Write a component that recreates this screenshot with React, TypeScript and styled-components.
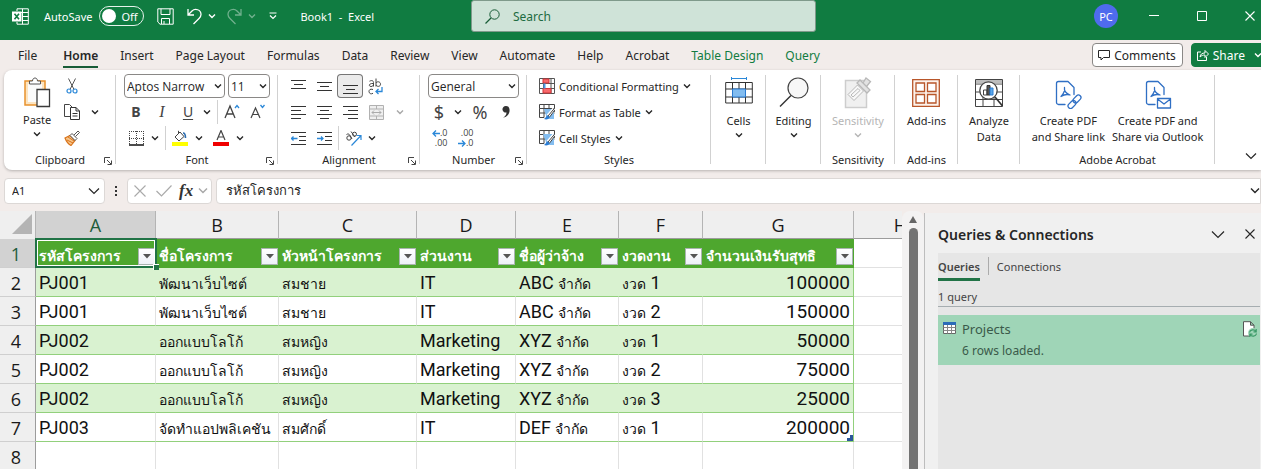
import React from "react";
import styled, { createGlobalStyle, css } from "styled-components";

const Global = createGlobalStyle`
  *, *::before, *::after { box-sizing: border-box; }
  html, body { margin: 0; background: #f2ecea; }
  body { font-family: "Noto Sans", "Open Sans", sans-serif; font-size: 12px; color: #262626; }
  button, input, select { font: inherit; color: inherit; margin: 0; padding: 0; border: 0; background: none; }
  svg { display: block; flex: none; }
`;

/* ---------- shell ---------- */
const Window = styled.div`
  display: flex;
  flex-direction: column;
  height: 100vh;
  overflow: hidden;
`;

const TitleBar = styled.header`
  display: flex;
  flex: none;
  height: 40px;
  background: #107c41;
  color: #fff;
`;
const QuickAccess = styled.div`
  display: flex;
  align-items: center;
  flex: 0 0 471px;
  height: 32px;
  padding-left: 12px;
`;
const AutoSave = styled.label`
  display: flex;
  align-items: center;
  gap: 7px;
  margin-left: 15px;
  font-size: 11px;
`;
const Pill = styled.span`
  display: flex;
  align-items: center;
  gap: 5px;
  width: 45px;
  height: 20px;
  padding-left: 2px;
  border: 1px solid #e6f3eb;
  border-radius: 10px;
`;
const Knob = styled.input`
  appearance: none;
  width: 14px;
  height: 14px;
  border-radius: 50%;
  background: #fff;
`;
const BarButton = styled.button<{ $gap?: number; $dim?: boolean }>`
  display: flex;
  align-items: center;
  gap: 6px;
  margin-left: ${(p) => p.$gap ?? 12}px;
  opacity: ${(p) => (p.$dim ? 0.4 : 1)};
`;
const DocName = styled.span`
  margin-left: 23px;
  font-size: 11px;
  white-space: pre;
`;
const SearchBox = styled.label`
  display: flex;
  align-items: center;
  gap: 13px;
  flex: 0 1 345px;
  height: 32px;
  padding-left: 13px;
  border: 1px solid #7f9a8b;
  border-radius: 3px;
  background: #cfe3d8;
  color: #185c37;
`;
const SearchInput = styled.input`
  flex: 1;
  min-width: 0;
  outline: none;
  &::placeholder { color: #1d6b41; opacity: 1; }
`;
const WindowControls = styled.div`
  display: flex;
  flex: 1;
  justify-content: flex-end;
  align-items: center;
  height: 32px;
  margin-right: -13px;
`;
const Avatar = styled.button`
  width: 24px;
  height: 24px;
  margin-right: 12px;
  border-radius: 50%;
  background: #4f6bed;
  font-size: 11px;
`;
const ControlButton = styled.button`
  display: flex;
  align-items: center;
  justify-content: center;
  width: 48px;
  height: 32px;
`;

/* ---------- tabs ---------- */
const TabStrip = styled.nav`
  display: flex;
  align-items: center;
  flex: none;
  height: 30px;
  padding-left: 18px;
`;
const TabLink = styled.a<{ $active?: boolean; $context?: boolean }>`
  margin: 4px 22px 0 0;
  border-bottom: 2px solid ${(p) => (p.$active ? "#185c37" : "transparent")};
  line-height: 20px;
  white-space: nowrap;
  color: ${(p) => (p.$context ? "#107c41" : "#262626")};
  font-weight: ${(p) => (p.$active ? 600 : 400)};
  text-decoration: none;
  &:first-child { margin-right: 26px; }
`;
const TabActions = styled.div`
  display: flex;
  gap: 8px;
  margin: 0 -8px 0 auto;
`;
const ActionButton = styled.button<{ $primary?: boolean }>`
  display: flex;
  align-items: center;
  gap: 4px;
  height: 24px;
  padding: 0 6px 0 5px;
  border: 1px solid ${(p) => (p.$primary ? "#107c41" : "#8a8886")};
  border-radius: 4px;
  background: ${(p) => (p.$primary ? "#107c41" : "#fff")};
  color: ${(p) => (p.$primary ? "#fff" : "#262626")};
`;

/* ---------- ribbon ---------- */
const Ribbon = styled.section`
  display: flex;
  flex: none;
  height: 100px;
  margin-left: 4px;
  border-radius: 8px 0 0 8px;
  background: #fff;
  box-shadow: 0 1px 3px rgba(0, 0, 0, 0.25);
  font-size: 11px;
`;
const GroupBox = styled.div<{ $w: number }>`
  position: relative;
  display: flex;
  flex-direction: column;
  flex: none;
  width: ${(p) => p.$w}px;
  &::after {
    content: "";
    position: absolute;
    top: 5px;
    right: 0;
    bottom: 6px;
    width: 1px;
    background: #d1d1d1;
  }
`;
const GroupBody = styled.div<{ $pad?: number; $center?: boolean }>`
  display: flex;
  flex: 1;
  padding: 3px 0 0 ${(p) => p.$pad ?? 0}px;
  ${(p) => p.$center && css`justify-content: center;`}
`;
const GroupFooter = styled.div`
  display: flex;
  align-items: center;
  height: 19px;
  padding-bottom: 2px;
  line-height: 16px;
`;
const GroupTitle = styled.span`
  flex: 1;
  text-align: center;
  white-space: nowrap;
`;
const Launcher = styled.button`
  margin: 2px 4px 0 -12px;
`;
const Stack = styled.div`
  display: flex;
  flex-direction: column;
`;
const ToolRow = styled.div`
  display: flex;
  align-items: center;
  height: 26px;
`;
const Tool = styled.button<{ $on?: boolean; $dim?: boolean }>`
  display: flex;
  align-items: center;
  justify-content: center;
  flex: none;
  width: 26px;
  height: 24px;
  border-radius: 4px;
  color: #444;
  opacity: ${(p) => (p.$dim ? 0.45 : 1)};
  ${(p) => p.$on && css`background: #ebebeb; box-shadow: inset 0 0 0 1px #767676;`}
`;
const Glyph = styled.span<{ $kind?: "b" | "i" | "u"; $size?: number }>`
  font-size: ${(p) => p.$size ?? 14}px;
  line-height: 20px;
  ${(p) => p.$kind === "b" && css`font-weight: 700;`}
  ${(p) => p.$kind === "i" && css`font-style: italic; font-family: "Liberation Serif", serif;`}
  ${(p) => p.$kind === "u" && css`text-decoration: underline; text-underline-offset: 2px;`}
`;
const Drop = styled.button<{ $gap?: number; $dim?: boolean }>`
  display: flex;
  align-items: center;
  justify-content: center;
  width: 12px;
  height: 24px;
  margin-left: ${(p) => p.$gap ?? 0}px;
  opacity: ${(p) => (p.$dim ? 0.4 : 1)};
`;
const Rule = styled.span<{ $gap?: number }>`
  width: 1px;
  height: 24px;
  margin: 0 1px 0 ${(p) => p.$gap ?? 4}px;
  background: #d1d1d1;
`;
const Spacer = styled.span<{ $w: number }>`
  flex: none;
  width: ${(p) => p.$w}px;
`;
const Picker = styled.span<{ $w: number }>`
  position: relative;
  flex: none;
  width: ${(p) => p.$w}px;
  margin-left: 1px;
  margin-right: 2px;
  svg { position: absolute; right: 3px; top: 9px; pointer-events: none; }
`;
const PickerSelect = styled.select`
  appearance: none;
  width: 100%;
  height: 24px;
  padding-left: 2px;
  border: 1px solid #8a8886;
  border-radius: 4px;
  background: #fff;
  font: 12px "Open Sans", sans-serif;
`;
const BigButton = styled.button<{ $dim?: boolean }>`
  display: flex;
  flex-direction: column;
  align-items: center;
  height: 78px;
  padding-top: 4px;
  line-height: 16px;
  white-space: nowrap;
  color: ${(p) => (p.$dim ? "#b5b5b5" : "#262626")};
  svg + span { margin-top: 4px; }
`;
const BigLabel = styled.span`
  display: flex;
  flex-direction: column;
  align-items: center;
  margin-bottom: 3px;
`;
const StyleButton = styled.button`
  display: flex;
  align-items: center;
  gap: 4px;
  height: 26px;
  white-space: nowrap;
`;
const RibbonEnd = styled.div`
  display: flex;
  flex: 1;
  align-items: flex-end;
  justify-content: flex-end;
  padding: 0 4px 10px 0;
`;

/* ---------- formula bar ---------- */
const FormulaBar = styled.div`
  display: flex;
  align-items: center;
  flex: none;
  height: 41px;
  padding-left: 4px;
`;
const Field = styled.div<{ $w?: number; $open?: boolean }>`
  display: flex;
  align-items: center;
  flex: ${(p) => (p.$w ? `0 0 ${p.$w}px` : "1")};
  min-width: 0;
  height: 26px;
  padding: 0 ${(p) => (p.$open ? 0 : 4)}px 0 7px;
  border: 1px solid #dcd8d6;
  border-radius: ${(p) => (p.$open ? "4px 0 0 4px" : "4px")};
  background: #fff;
`;
const FieldInput = styled.input<{ $thai?: boolean }>`
  flex: 1;
  width: 0;
  min-width: 0;
  outline: none;
  font-size: ${(p) => (p.$thai ? 13 : 11)}px;
  padding-left: ${(p) => (p.$thai ? 2 : 0)}px;
`;
const Dots = styled.span`
  display: flex;
  justify-content: center;
  width: 22px;
`;
const FxTools = styled(Field)`
  margin-right: 4px;
  padding: 0;
  ${Tool} { width: 24px; }
`;
const FxButton = styled.button`
  margin: 0 4px 0 3px;
  font: italic 700 17px "Liberation Serif", serif;
  color: #333;
`;

/* ---------- sheet ---------- */
const Workspace = styled.div`
  display: flex;
  flex: 1;
  min-height: 0;
`;
const SheetArea = styled.main`
  flex: 1;
  min-width: 0;
  overflow: hidden;
  background: #fff;
`;
const Grid = styled.table`
  table-layout: fixed;
  width: 948px;
  border-collapse: separate;
  border-spacing: 0;
  font-family: Roboto, "Noto Sans", sans-serif;
  font-size: 18px;
  color: #111;
`;
const ColHead = styled.th<{ $active?: boolean }>`
  height: 28px;
  padding: 0;
  border-right: 1px solid #b4b4b4;
  border-bottom: 1px solid #9c9c9c;
  background: ${(p) => (p.$active ? "#d2d2d2" : "#efefef")};
  color: ${(p) => (p.$active ? "#1e5c3a" : "#1a1a1a")};
  font: 400 18px/26px "Open Sans", sans-serif;
  ${(p) => p.$active && css`border-bottom-color: #217346;`}
`;
const Corner = styled.td`
  padding: 0 3px 3px 0;
  border-right: 1px solid #b4b4b4;
  background: #efefef;
  svg { margin-left: auto; }
`;
const RowHead = styled.th<{ $active?: boolean }>`
  height: 29px;
  padding: 1px 3px 0 0;
  border-right: 1px solid #9c9c9c;
  border-bottom: 1px solid #cfcfcf;
  background: ${(p) => (p.$active ? "#d2d2d2" : "#efefef")};
  color: ${(p) => (p.$active ? "#1e5c3a" : "#1a1a1a")};
  font: 400 18px/26px "Open Sans", sans-serif;
`;
const FieldHead = styled.th`
  position: relative;
  height: 29px;
  padding: 0 1px 0 3px;
  background: #4ea72e;
  color: #fff;
  text-align: left;
`;
const FieldHeadInner = styled.div`
  display: flex;
  align-items: center;
  justify-content: space-between;
  padding-top: 6px;
  font-size: 14px;
  line-height: 20px;
  font-weight: 600;
  white-space: nowrap;
`;
const FieldName = styled.span`
  margin-top: -2px;
`;
const FilterButton = styled.button`
  display: flex;
  align-items: center;
  justify-content: center;
  width: 17px;
  height: 17px;
  border: 1px solid #a9b4b0;
  background: linear-gradient(#fff, #eef1f8);
`;
const Selection = styled.span`
  position: absolute;
  inset: -1px -1px 0 -1px;
  border: 2px solid #217346;
  box-shadow: inset 0 0 0 1px #fff;
  pointer-events: none;
  z-index: 1;
  &::after {
    content: "";
    position: absolute;
    right: -4px;
    bottom: -4px;
    width: 6px;
    height: 6px;
    border: solid #fff;
    border-width: 1px 0 0 1px;
    background: #217346;
  }
`;
const Cell = styled.td<{ $band?: boolean; $plain?: boolean; $num?: boolean; $last?: boolean }>`
  position: relative;
  height: 29px;
  padding: 2px 3px 0;
  border-bottom: 1px solid ${(p) => (p.$plain ? "#e1e1e1" : "#92d07c")};
  border-right: 1px solid ${(p) => (p.$last ? "#92d07c" : p.$band ? "#d9f2d0" : "#e1e1e1")};
  background: ${(p) => (p.$band ? "#d9f2d0" : "#fff")};
  text-align: ${(p) => (p.$num ? "right" : "left")};
  font-size: ${(p) => (p.$num ? 19 : 18)}px;
  line-height: 24px;
  white-space: nowrap;
`;
const Thai = styled.span`
  font-size: 14px;
  line-height: 14px;
`;
const TableCorner = styled.span`
  position: absolute;
  right: 0;
  bottom: 0;
  width: 6px;
  height: 6px;
  border: solid #2b579a;
  border-width: 0 3px 3px 0;
`;

const ScrollTrack = styled.div`
  display: flex;
  flex-direction: column;
  align-items: center;
  flex: 0 0 22px;
  gap: 5px;
  padding-top: 5px;
  border-radius: 8px 8px 0 0;
  background: #f3f2f2;
`;
const ScrollThumb = styled.div`
  flex: 1;
  width: 9px;
  border-radius: 5px 5px 0 0;
  background: #737373;
`;

/* ---------- side pane ---------- */
const Pane = styled.aside`
  display: flex;
  flex-direction: column;
  flex: 0 0 337px;
  padding: 0 1px 0 13px;
  margin-top: 2px;
  border-left: 1px solid #bdbdbd;
  background: #f0f0f0;
`;
const PaneHeader = styled.div`
  display: flex;
  align-items: center;
  gap: 20px;
  height: 40px;
  padding: 2px 5px 0 0;
`;
const PaneTitle = styled.h2`
  flex: 1;
  margin: 0;
  font-size: 14px;
  font-weight: 600;
`;
const PaneBody = styled.div`
  flex: 1;
  background: #e6e6e6;
  color: #444;
`;
const PaneTabs = styled.div`
  display: flex;
  height: 32px;
  padding-top: 4px;
`;
const PaneTab = styled.button<{ $active?: boolean }>`
  height: 24px;
  padding-bottom: 2px;
  border-bottom: 3px solid ${(p) => (p.$active ? "#217346" : "transparent")};
  font-size: 11px;
  font-weight: ${(p) => (p.$active ? 600 : 400)};
`;
const PaneRule = styled.span`
  width: 1px;
  height: 18px;
  margin: 0 8px;
  background: #ababab;
`;
const QueryCount = styled.div`
  height: 22px;
  margin-bottom: 8px;
  padding-top: 3px;
  border-bottom: 1px solid #a6adb0;
  font-size: 11px;
  line-height: 18px;
`;
const QueryCard = styled.div`
  display: flex;
  gap: 6px;
  height: 50px;
  padding: 4px 3px 0 5px;
  background: #9fd5b7;
  color: #3a5a4a;
`;
const QueryText = styled.div`
  flex: 1;
`;
const QueryName = styled.div`
  font-size: 13px;
  line-height: 20px;
`;
const QueryStatus = styled.div`
  line-height: 24px;
`;

/* ---------- icons ---------- */
type IconProps = { w?: number; h?: number; children?: React.ReactNode };
const Icon = ({ w = 16, h = w, children }: IconProps) => (
  <svg width={w} height={h} viewBox={`0 0 ${w} ${h}`} fill="none" stroke="currentColor" strokeWidth="1" aria-hidden="true">
    {children}
  </svg>
);
const Chevron = ({ w = 6 }: { w?: number }) => (
  <Icon w={w + 2} h={w / 2 + 3}>
    <path d={`M1 1.5l${w / 2} ${w / 2} ${w / 2}-${w / 2}`} strokeWidth={w > 8 ? 1.2 : 1.4} />
  </Icon>
);
const Cross = ({ s = 11 }: { s?: number }) => (
  <Icon w={s}><path d={`M.5.5L${s - 0.5} ${s - 0.5}M${s - 0.5}.5L.5 ${s - 0.5}`} strokeWidth="1.1" /></Icon>
);
const ExcelLogo = () => (
  <Icon w={17}>
    <path d="M5 3V.8h11.300v15.400H5V14M5.500 4.500h10.800M10 8.500h6.300M10 12.500h6.300M10.500.8v15.400" />
    <rect x="0" y="3.500" width="9.500" height="10" fill="#fff" stroke="none" />
    <path d="M2.500 5.800l4.500 5.500M7 5.800l-4.500 5.500" stroke="#107c41" strokeWidth="1.600" />
  </Icon>
);
const SaveIcon = () => (
  <Icon w={17}>
    <path d="M.8.8h15.400v15.400H3L.8 14zM4 .8v5.700h9V.8M4.500 16v-5.500h8V16" />
    <path d="M7 13v3" />
  </Icon>
);
const UndoIcon = () => (
  <Icon w={15} h={17}><path d="M1 1v6h6M1 7l4-4c3-3 9-1.500 9 3.500 0 2-1 3-2 4L6.500 16" strokeWidth="1.300" /></Icon>
);
const RedoIcon = () => (
  <Icon w={15} h={17}><path d="M14 1v6H8M14 7l-4-4C7 0 1 1.500 1 6.500c0 2 1 3 2 4L8.500 16" strokeWidth="1.300" /></Icon>
);
const SearchIcon = () => (
  <Icon w={15}><circle cx="9.500" cy="5.500" r="4.700" /><path d="M6 9L.5 14.500" strokeWidth="1.200" /></Icon>
);
const PasteIcon = () => (
  <Icon w={28} h={31}>
    <path d="M2 4h20v24H2z" fill="#fce4c0" stroke="#e8912d" strokeWidth="1.500" />
    <path d="M5 7h14v18H5z" fill="#fbfbfb" stroke="none" />
    <path d="M6.500 7V4h3c0-4 5-4 5 0h3v3z" fill="#fff" stroke="#555" />
    <path d="M14 12.500h12.500v17H14z" fill="#fff" stroke="#3b3b3b" strokeWidth="1.300" />
  </Icon>
);
const CutIcon = () => (
  <Icon w={12} h={16}>
    <path d="M2.500.5l5.500 11M9.500.5L4 11.500" stroke="#555" />
    <circle cx="3" cy="13" r="2" stroke="#2b88d8" strokeWidth="1.200" /><circle cx="9" cy="13" r="2" stroke="#2b88d8" strokeWidth="1.200" />
  </Icon>
);
const CopyIcon = () => (
  <Icon>
    <path d="M6 12.500H.5V.5h5L8 3" stroke="#444" />
    <path d="M6.500 3.500H12l3.500 3.500v8.500h-9zM12 3.500V7h3.500M8.500 9.500h5M8.500 12h5" stroke="#333" />
  </Icon>
);
const BrushIcon = () => (
  <Icon>
    <path d="M1 8l5-2.500 5 5L7 15.500C4 14 2.500 12 1 8z" fill="#f7c58a" stroke="#d9731a" strokeWidth="1.200" />
    <path d="M3 10l6 3M4 7l6 4" stroke="#d9731a" />
    <path d="M6 5.500L8 3.500l5 5-2 2zM10 5l4-4 1.500 1.500-4 4" fill="#fff" stroke="#555" />
  </Icon>
);
const GrowA = ({ up }: { up?: boolean }) => (
  <Icon w={16} h={18}>
    {up ? <path d="M1 15L6 3l5 12M3 11h6" stroke="#444" strokeWidth="1.300" /> : <path d="M1 15L5.500 5 10 15M2.500 11.500h6" stroke="#444" strokeWidth="1.200" />}
    <path d={up ? "M11 5l2-2.500L15 5" : "M10.500 2l2 2.500 2-2.500"} stroke="#2b88d8" strokeWidth="1.300" />
  </Icon>
);
const BordersIcon = () => (
  <Icon w={15}>
    <path d="M.5 0v13M7.500 0v13M14.500 0v13M0 .5h15M0 7.500h15" stroke="#444" strokeDasharray="1 1" />
    <path d="M0 14h15" stroke="#111" strokeWidth="1.500" />
  </Icon>
);
const FillIcon = () => (
  <Icon w={16} h={16}>
    <path d="M3 7l5-5 4 4.500L7 11zM6.500 3.500V.8" stroke="#444" />
    <path d="M11 3c2 0 2.500 2 2.500 5" stroke="#2b6cb0" strokeWidth="1.600" />
    <path d="M0 12h16v4H0z" fill="#ffff00" stroke="none" />
  </Icon>
);
const FontColorIcon = () => (
  <Icon w={16} h={16}>
    <path d="M4 10L8 .5 12 10M5.300 7h5.400" stroke="#444" strokeWidth="1.200" />
    <path d="M0 12h16v4H0z" fill="#f00000" stroke="none" />
  </Icon>
);
const Lines = ({ x, y }: { x: [number, number][]; y: number }) => (
  <Icon w={15}>
    <path d={x.map(([a, b], i) => `M${a} ${y + i * 4 + 0.5}H${b}`).join("")} stroke="#333" strokeWidth="1" />
  </Icon>
);
const WrapIcon = () => (
  <Icon w={16} h={17}>
    <path d="M1.500 3.200c3-1.500 4 0 4 1.500v3.800M5.500 5.500c-5-.5-5 3-2.500 3 1.500 0 2.500-1 2.500-2M8 .5v8M8 5c1-2 4.500-1.500 4.500 1.200S9 9 8 7M5 11.500c-3-1-4 .5-4 2 0 2 2 3 4 1.800" stroke="#444" />
    <path d="M14 9v4.500H8M10.500 11L8 13.500l2.500 2.500" stroke="#2b88d8" strokeWidth="1.300" />
  </Icon>
);
const MergeIcon = () => (
  <Icon w={15}>
    <path d="M.5.500h14v14H.5zM.5 4h14M.5 11h14M7.500.5V4M7.500 11v3.500" stroke="#555" fill="#ddd" />
    <path d="M3 7.500h9M5 5.500l-2 2 2 2M10 5.500l2 2-2 2" stroke="#444" />
  </Icon>
);
const IndentIcon = ({ right }: { right?: boolean }) => (
  <Icon w={15} h={13}>
    <path d="M0 .5h15M8 4.500h7M8 8.500h7M0 12.500h15" stroke="#333" />
    <path d={right ? "M0 6.500h6M4 4.500l2 2-2 2" : "M6.500 6.500H.500M2.500 4.500l-2 2 2 2"} stroke="#2b88d8" strokeWidth="1.300" />
  </Icon>
);
const OrientIcon = () => (
  <Icon w={17} h={15}>
    <circle cx="4" cy="7" r="2.200" stroke="#444" /><path d="M1.500 3.500c1.500-1 2.500-.5 3.200.5L7 8M6 .5l4 5.500" stroke="#444" />
    <circle cx="9.500" cy="3.200" r="2" stroke="#444" />
    <path d="M6.500 14.500L16 4.500M11.500 4.500H16v4.500" stroke="#2b88d8" strokeWidth="1.200" />
  </Icon>
);
const Zeros = styled.span`
  display: flex;
  flex-direction: column;
  gap: 2px;
  width: 17px;
  font: 9px/8px "Open Sans", sans-serif;
  white-space: nowrap;
`;
const ZeroLine = styled.span`
  display: flex;
  align-items: center;
  justify-content: flex-end;
`;
const Arrow = ({ right }: { right?: boolean }) => (
  <Icon w={8} h={7}><path d={right ? "M0 3.500h7M4 .5l3 3-3 3" : "M8 3.500H1M4 .5l-3 3 3 3"} stroke="#2b88d8" strokeWidth="1.300" /></Icon>
);
const CondIcon = () => (
  <Icon>
    <path d="M.5.500h15v15H.5zM.5 5.500h15M.5 10.500h15M4.500.5v15M12 .5v15" stroke="#555" />
    <path d="M4 1h6v4H4zM4 10.500h8V15H4z" fill="#f8696b" stroke="#d13438" />
    <path d="M4.500 5.500h2v5h-2z" fill="#4a9be8" stroke="none" />
  </Icon>
);
const TableBrushIcon = ({ solid }: { solid?: boolean }) => (
  <Icon>
    <path d="M.5.500h15v4H.5zM.5 4.500v9H5M.5 9h15M5 .5v13M10 .5v4M15.500 4.500V8" stroke="#444" />
    <path d={solid ? "M4 4h11v11H8z" : "M5 5h10v10H8z"} fill="#83bdf0" stroke="none" />
    <path d="M15 5L9 12" stroke="#fff" strokeWidth="3.500" />
    <path d="M15.300 4.500L9 12l1.500 1.200L15.800 6" fill="#fff" stroke="#444" />
    <path d="M9 11.500c-2 0-2 2.500-4 3.500 2 1 5 .5 5.500-2z" fill="#2b7cd3" stroke="none" />
  </Icon>
);
const CellsIcon = () => (
  <Icon w={28} h={32}>
    <path d="M6.500 1.500h15M6.500 0v3M21.500 0v3" stroke="#2b88d8" />
    <path d="M.700 5.500h26.600V26H.7zM.7 12h26.600M.7 20h26.600M7.500 5.500V26M20.500 5.500V26M14 5.500V12M14 20v6" stroke="#333" />
    <path d="M7.500 12h13v8h-13z" fill="#83bdf0" stroke="#2b7cd3" />
  </Icon>
);
const EditIcon = () => (
  <Icon w={30} h={32}><circle cx="19" cy="11" r="10" fill="#f7f7f7" stroke="#444" strokeWidth="1.200" /><path d="M12 18.500L1 29.500" stroke="#333" strokeWidth="1.400" /></Icon>
);
const SensitivityIcon = () => (
  <Icon w={28} h={32}>
    <path d="M1.500 3.500h21v27h-21z" fill="#f0f0f0" stroke="#cdcdcd" strokeWidth="1.500" />
    <path d="M4 17.500L13.500 8l6 6L10 23.500zM7 18l7-6.500 2 2-7 6.500z" fill="#f8f8f8" stroke="#b8b8b8" />
    <path d="M13 6l3-3 10 10-3 3zM19 6l3-5 4.500 3.500-4 5" fill="#e2e2e2" stroke="#b8b8b8" strokeWidth="1.300" />
  </Icon>
);
const AddinsIcon = () => (
  <Icon w={28} h={32}>
    <g stroke="#b8562a" strokeWidth="1.300"><path d="M.7 2.700h26.600v26.600H.7z" fill="#fdf3ec" />
      <path d="M4 6h8.500v8.500H4zM15.500 6H24v8.500h-8.500zM4 17.500h8.500V26H4zM15.500 17.500H24V26h-8.500z" fill="#fff" /></g>
  </Icon>
);
const AnalyzeIcon = () => (
  <Icon w={28} h={32}>
    <path d="M.5 2.500h27v27H.5zM.5 7h27M.5 15h27M.5 22.500h27M8 7v22.500M19 7v22.500" stroke="#444" />
    <path d="M1 3h26v3.500H1z" fill="#bdbdbd" stroke="none" />
    <circle cx="13.500" cy="13.500" r="8.700" fill="#fff" stroke="#444" strokeWidth="1.300" />
    <path d="M20 20l7.500 9" stroke="#333" strokeWidth="1.600" />
    <path d="M8.500 13h3.500v5H8.500z" fill="#fff" stroke="#444" /><path d="M12 8.500h3V18h-3z" fill="#555" stroke="#333" /><path d="M15 11h3v7h-3z" fill="#5ba7ea" stroke="#2b7cd3" />
  </Icon>
);
const PdfIcon = ({ mail }: { mail?: boolean }) => (
  <Icon w={28} h={32}>
    <g stroke="#2f6fc4" strokeWidth="1.300" strokeLinecap="round" strokeLinejoin="round">
      <path d="M11 27.500H4.500c-1 0-2-1-2-2V6.500c0-1 1-2 2-2H14l6 6v7" />
      <path d="M10.500 10.500c-.5 3 .5 5.500 5.500 7.500-3-1-6-.5-9 1.500 3-3 4-5.500 3.500-9z" />
      {mail ? (
        <path d="M13.500 21.500h13v9.500h-13zM13.500 22l6.500 5 6.500-5" fill="#fff" />
      ) : (
        <><rect x="18.500" y="19.500" width="9" height="5" rx="2.500" transform="rotate(-45 23 22)" /><rect x="13.500" y="25" width="9" height="5" rx="2.500" transform="rotate(-45 18 27.500)" /></>
      )}
    </g>
  </Icon>
);
const LaunchIcon = () => (
  <Icon w={8} h={8}><path d="M.5 6V.5H6M3 3l4 4M7.500 3.500v4h-4" stroke="#444" /></Icon>
);
const FilterArrow = () => (
  <Icon w={8} h={5}><path d="M0 0h8L4 4.500z" fill="#555" stroke="none" /></Icon>
);

/* ---------- composed parts ---------- */
type GroupProps = { w: number; title?: string; pad?: number; center?: boolean; launcher?: boolean; children: React.ReactNode };
const Group = ({ w, title, pad, center, launcher, children }: GroupProps) => (
  <GroupBox $w={w}>
    <GroupBody $pad={pad} $center={center}>{children}</GroupBody>
    <GroupFooter>
      <GroupTitle>{title}</GroupTitle>
      {launcher && <Launcher aria-label={`${title} settings`}><LaunchIcon /></Launcher>}
    </GroupFooter>
  </GroupBox>
);
const Big = ({ icon, lines, drop, dim }: { icon: React.ReactNode; lines: string[]; drop?: boolean; dim?: boolean }) => (
  <BigButton $dim={dim}>
    {icon}
    <BigLabel>{lines.map((l) => <span key={l}>{l}</span>)}</BigLabel>
    {drop && <Chevron />}
  </BigButton>
);
const Select = ({ w, label, value }: { w: number; label: string; value: string }) => (
  <Picker $w={w}>
    <PickerSelect aria-label={label} defaultValue={value}><option>{value}</option></PickerSelect>
    <Chevron />
  </Picker>
);

const tabs = ["File", "Home", "Insert", "Page Layout", "Formulas", "Data", "Review", "View", "Automate", "Help", "Acrobat", "Table Design", "Query"];
const columns = [
  { letter: "A", width: 120, name: "รหัสโครงการ" },
  { letter: "B", width: 123, name: "ชื่อโครงการ" },
  { letter: "C", width: 138, name: "หัวหน้าโครงการ" },
  { letter: "D", width: 99, name: "ส่วนงาน" },
  { letter: "E", width: 103, name: "ชื่อผู้ว่าจ้าง" },
  { letter: "F", width: 84, name: "งวดงาน" },
  { letter: "G", width: 151, name: "จำนวนเงินรับสุทธิ" },
];
const rows = [
  ["PJ001", "พัฒนาเว็บไซต์", "สมชาย", "IT", "ABC จำกัด", "งวด 1", "100000"],
  ["PJ001", "พัฒนาเว็บไซต์", "สมชาย", "IT", "ABC จำกัด", "งวด 2", "150000"],
  ["PJ002", "ออกแบบโลโก้", "สมหญิง", "Marketing", "XYZ จำกัด", "งวด 1", "50000"],
  ["PJ002", "ออกแบบโลโก้", "สมหญิง", "Marketing", "XYZ จำกัด", "งวด 2", "75000"],
  ["PJ002", "ออกแบบโลโก้", "สมหญิง", "Marketing", "XYZ จำกัด", "งวด 3", "25000"],
  ["PJ003", "จัดทำแอปพลิเคชัน", "สมศักดิ์", "IT", "DEF จำกัด", "งวด 1", "200000"],
];
/* Thai runs are set smaller than the Latin text around them. */
const mixed = (text: string) =>
  text.split(/([\u0E00-\u0E7F]+)/).filter(Boolean).map((part, i) =>
    /[\u0E00-\u0E7F]/.test(part) ? <Thai key={i}>{part}</Thai> : part
  );

export default function App() {
  return (
    <Window>
      <Global />
      <TitleBar>
        <QuickAccess>
          <ExcelLogo />
          <AutoSave>
            AutoSave
            <Pill><Knob type="checkbox" />Off</Pill>
          </AutoSave>
          <BarButton aria-label="Save" $gap={13}><SaveIcon /></BarButton>
          <BarButton aria-label="Undo" $gap={13}><UndoIcon /><Chevron /></BarButton>
          <BarButton aria-label="Redo" $gap={11} $dim><RedoIcon /><Chevron /></BarButton>
          <BarButton aria-label="Customize toolbar" $gap={13}>
            <Icon w={8} h={8}><path d="M.5 1h7M1 3.500l3 3 3-3" strokeWidth="1.200" /></Icon>
          </BarButton>
          <DocName>{"Book1  -  Excel"}</DocName>
        </QuickAccess>
        <SearchBox>
          <SearchIcon />
          <SearchInput type="text" placeholder="Search" aria-label="Search" />
        </SearchBox>
        <WindowControls>
          <Avatar>PC</Avatar>
          <ControlButton aria-label="Minimize"><Icon w={10}><path d="M0 4.500h10" /></Icon></ControlButton>
          <ControlButton aria-label="Maximize"><Icon w={10}><path d="M.5.500h9v9h-9z" /></Icon></ControlButton>
          <ControlButton aria-label="Close"><Cross s={10} /></ControlButton>
        </WindowControls>
      </TitleBar>

      <TabStrip>
        {tabs.map((t, i) => (
          <TabLink key={t} href="#" $active={t === "Home"} $context={i > 10}>{t}</TabLink>
        ))}
        <TabActions>
          <ActionButton>
            <Icon w={12} h={11}><path d="M.5.500h11v7h-6L3 10V7.500H.5z" /></Icon>Comments
          </ActionButton>
          <ActionButton $primary>
            <Icon w={12} h={12}><path d="M4 3H.5v8.500h9V8M3 8c.5-3 2-4 5-4V1.500L11.500 5 8 8.500V6C6 6 4.500 6.500 3 8z" /></Icon>Share<Spacer $w={1} /><Chevron />
          </ActionButton>
        </TabActions>
      </TabStrip>

      <Ribbon>
        <Group w={112} title="Clipboard" pad={19} launcher>
          <Big icon={<PasteIcon />} lines={["Paste"]} drop />
          <Spacer $w={8} />
          <Stack>
            <ToolRow><Tool aria-label="Cut"><CutIcon /></Tool></ToolRow>
            <ToolRow><Tool aria-label="Copy"><CopyIcon /></Tool><Drop aria-label="Copy options" $gap={4}><Chevron /></Drop></ToolRow>
            <ToolRow><Tool aria-label="Format Painter"><BrushIcon /></Tool></ToolRow>
          </Stack>
        </Group>

        <Group w={162} title="Font" pad={7} launcher>
          <Stack>
            <ToolRow>
              <Select w={101} label="Font" value="Aptos Narrow" />
              <Select w={42} label="Font size" value="11" />
            </ToolRow>
            <ToolRow>
              <Tool aria-label="Bold"><Glyph $kind="b">B</Glyph></Tool>
              <Tool aria-label="Italic"><Glyph $kind="i" $size={16}>I</Glyph></Tool>
              <Tool aria-label="Underline"><Glyph $kind="u">U</Glyph></Tool>
              <Drop aria-label="Underline options"><Chevron /></Drop>
              <Rule />
              <Tool aria-label="Increase font size"><GrowA up /></Tool>
              <Tool aria-label="Decrease font size"><GrowA /></Tool>
            </ToolRow>
            <ToolRow>
              <Tool aria-label="Borders"><BordersIcon /></Tool>
              <Drop aria-label="Border options"><Chevron /></Drop>
              <Rule />
              <Tool aria-label="Fill color"><FillIcon /></Tool>
              <Drop aria-label="Fill color options"><Chevron /></Drop>
              <Spacer $w={3} />
              <Tool aria-label="Font color"><FontColorIcon /></Tool>
              <Drop aria-label="Font color options"><Chevron /></Drop>
            </ToolRow>
          </Stack>
        </Group>

        <Group w={142} title="Alignment" pad={7} launcher>
          <Stack>
            <ToolRow>
              <Tool aria-label="Top align"><Lines y={1} x={[[0, 15], [3, 12], [0, 15]]} /></Tool>
              <Tool aria-label="Middle align"><Lines y={3} x={[[0, 15], [3, 12], [0, 15]]} /></Tool>
              <Tool aria-label="Bottom align" $on><Lines y={6} x={[[0, 15], [3, 12], [0, 15]]} /></Tool>
              <Tool aria-label="Wrap text"><WrapIcon /></Tool>
            </ToolRow>
            <ToolRow>
              <Tool aria-label="Align left"><Lines y={1} x={[[0, 15], [0, 10], [0, 15], [0, 10]]} /></Tool>
              <Tool aria-label="Center"><Lines y={1} x={[[0, 15], [3, 12], [0, 15], [3, 12]]} /></Tool>
              <Tool aria-label="Align right"><Lines y={1} x={[[0, 15], [5, 15], [0, 15], [5, 15]]} /></Tool>
              <Tool aria-label="Merge cells" $dim><MergeIcon /></Tool>
              <Drop aria-label="Merge options" $gap={5} $dim><Chevron /></Drop>
            </ToolRow>
            <ToolRow>
              <Tool aria-label="Decrease indent"><IndentIcon /></Tool>
              <Tool aria-label="Increase indent"><IndentIcon right /></Tool>
              <Rule $gap={1} />
              <Tool aria-label="Orientation"><OrientIcon /></Tool>
              <Drop aria-label="Orientation options"><Chevron /></Drop>
            </ToolRow>
          </Stack>
        </Group>

        <Group w={107} title="Number" pad={6} launcher>
          <Stack>
            <ToolRow><Spacer $w={1} /><Select w={91} label="Number format" value="General" /></ToolRow>
            <ToolRow>
              <Tool aria-label="Currency"><Glyph $size={18}>$</Glyph></Tool>
              <Drop aria-label="Currency options"><Chevron /></Drop>
              <Spacer $w={3} />
              <Tool aria-label="Percent"><Glyph $size={18}>%</Glyph></Tool>
              <Tool aria-label="Comma style">
                <Icon w={8} h={14}><path d="M4 1a3.300 3.300 0 1 0 .5 6.500C4.500 10 3 11.500 1 12.800 5.500 12 8 8 7.500 4.500 7.300 2 6 1 4 1z" fill="#333" stroke="none" /></Icon>
              </Tool>
            </ToolRow>
            <ToolRow>
              <Tool aria-label="Increase decimal"><Zeros><ZeroLine><Arrow />.0</ZeroLine><ZeroLine>.00</ZeroLine></Zeros></Tool>
              <Tool aria-label="Decrease decimal"><Zeros><ZeroLine>.00</ZeroLine><ZeroLine><Arrow right />.0</ZeroLine></Zeros></Tool>
            </ToolRow>
          </Stack>
        </Group>

        <Group w={184} title="Styles" pad={12}>
          <Stack>
            <StyleButton><CondIcon />Conditional Formatting<Chevron /></StyleButton>
            <StyleButton><TableBrushIcon />Format as Table<Chevron /></StyleButton>
            <StyleButton><TableBrushIcon solid />Cell Styles<Chevron /></StyleButton>
          </Stack>
        </Group>

        <Group w={55} center><Big icon={<CellsIcon />} lines={["Cells"]} drop /></Group>
        <Group w={55} center><Big icon={<EditIcon />} lines={["Editing"]} drop /></Group>
        <Group w={74} title="Sensitivity" center><Big icon={<SensitivityIcon />} lines={["Sensitivity"]} drop dim /></Group>
        <Group w={63} title="Add-ins" center><Big icon={<AddinsIcon />} lines={["Add-ins"]} /></Group>
        <Group w={62} center><Big icon={<AnalyzeIcon />} lines={["Analyze", "Data"]} /></Group>
        <Group w={195} title="Adobe Acrobat" center>
          <Big icon={<PdfIcon />} lines={["Create PDF", "and Share link"]} />
          <Spacer $w={7} />
          <Big icon={<PdfIcon mail />} lines={["Create PDF and", "Share via Outlook"]} />
        </Group>
        <RibbonEnd><button aria-label="Collapse ribbon"><Chevron w={10} /></button></RibbonEnd>
      </Ribbon>

      <FormulaBar>
        <Field $w={101}>
          <FieldInput aria-label="Name box" defaultValue="A1" />
          <button aria-label="Name list"><Chevron w={10} /></button>
        </Field>
        <Dots><Icon w={2} h={10}><path d="M0 1h2M0 5h2M0 9h2" stroke="#333" strokeWidth="2" /></Icon></Dots>
        <FxTools $w={85}>
          <Tool aria-label="Cancel" $dim><Cross s={12} /></Tool>
          <Tool aria-label="Enter" $dim><Icon w={16} h={12}><path d="M.5 6l5 5L15.500.5" strokeWidth="1.200" /></Icon></Tool>
          <FxButton aria-label="Insert function">fx</FxButton>
          <Drop aria-label="Function list" $dim><Chevron w={8} /></Drop>
        </FxTools>
        <Field $open>
          <FieldInput $thai aria-label="Formula" defaultValue="รหัสโครงการ" />
          <button aria-label="Expand formula bar"><Chevron w={8} /></button>
        </Field>
      </FormulaBar>

      <Workspace>
        <SheetArea>
          <Grid>
            <colgroup>
              <col width={36} />
              {columns.map((c) => <col key={c.letter} width={c.width} />)}
              <col width={94} />
            </colgroup>
            <thead>
              <tr>
                <Corner><Icon w={20} h={20}><path d="M20 0v20H0z" fill="#b4b4b4" stroke="none" /></Icon></Corner>
                {columns.map((c, i) => <ColHead key={c.letter} scope="col" $active={i === 0}>{c.letter}</ColHead>)}
                <ColHead scope="col">H</ColHead>
              </tr>
            </thead>
            <tbody>
              <tr>
                <RowHead scope="row" $active>1</RowHead>
                {columns.map((c, i) => (
                  <FieldHead key={c.letter}>
                    <FieldHeadInner>
                      <FieldName>{c.name}</FieldName>
                      <FilterButton aria-label={`Filter ${c.name}`}><FilterArrow /></FilterButton>
                    </FieldHeadInner>
                    {i === 0 && <Selection />}
                  </FieldHead>
                ))}
                <Cell $plain />
              </tr>
              {rows.map((r, i) => (
                <tr key={i}>
                  <RowHead scope="row">{i + 2}</RowHead>
                  {r.map((v, j) => (
                    <Cell key={j} $band={i % 2 === 0} $num={j === 6} $last={j === 6}>
                      {mixed(v)}
                      {i === rows.length - 1 && j === 6 && <TableCorner />}
                    </Cell>
                  ))}
                  <Cell $plain />
                </tr>
              ))}
              <tr>
                <RowHead scope="row">8</RowHead>
                {columns.map((c) => <Cell key={c.letter} $plain />)}
                <Cell $plain />
              </tr>
            </tbody>
          </Grid>
        </SheetArea>
        <ScrollTrack>
          <Icon w={8} h={7}><path d="M4 0l4 7H0z" fill="#666" stroke="none" /></Icon>
          <ScrollThumb />
        </ScrollTrack>
        <Pane>
          <PaneHeader>
            <PaneTitle>Queries &amp; Connections</PaneTitle>
            <button aria-label="Pane options"><Chevron w={12} /></button>
            <button aria-label="Close pane"><Cross s={10} /></button>
          </PaneHeader>
          <PaneBody>
            <PaneTabs>
              <PaneTab $active>Queries</PaneTab>
              <PaneRule />
              <PaneTab>Connections</PaneTab>
            </PaneTabs>
            <QueryCount>1 query</QueryCount>
            <QueryCard>
              <Icon w={13} h={20}>
                <path d="M.5 3.500h12v11H.5z" fill="#fff" stroke="#666" /><path d="M.5 8.500h12M.5 11.500h12M4.500 6v8.500M8.500 6v8.500" stroke="#888" />
                <path d="M0 3h13v3H0z" fill="#2b6cb8" stroke="none" />
              </Icon>
              <QueryText>
                <QueryName>Projects</QueryName>
                <QueryStatus>6 rows loaded.</QueryStatus>
              </QueryText>
              <button aria-label="Refresh">
                <Icon w={14} h={42}>
                  <path d="M.5.700h7l3.500 3.500V15H.5zM7.500.7v3.500H11" fill="#fff" stroke="#555" />
                  <circle cx="10" cy="12" r="5" fill="#9fd5b7" stroke="none" />
                  <path d="M6.500 11.500c.5-3 5-3.500 6.500-1M13.200 8v2.800h-2.700M13.500 12.500c-.5 3-5 3.500-6.500 1M6.800 16v-2.800h2.700" stroke="#3c9a68" strokeWidth="1.200" />
                </Icon>
              </button>
            </QueryCard>
          </PaneBody>
        </Pane>
      </Workspace>
    </Window>
  );
}
